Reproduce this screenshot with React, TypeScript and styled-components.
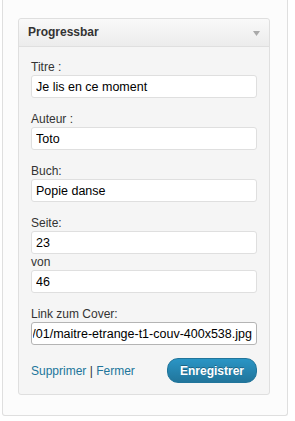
import styled, { createGlobalStyle } from "styled-components";
import { useEffect, useRef } from "react";

const GlobalStyle = createGlobalStyle`
    body {
        margin: 0;
        background: #fff;
        font-family: "Liberation Sans", Arial, sans-serif;
        color: #333;
    }
`;

const Sidebar = styled.div`
    width: 286px;
    box-sizing: border-box;
    margin-left: 2px;
    padding: 18px 0 20px 15px;
    background: #fcfcfc;
    border: 1px solid #dfdfdf;
    border-top: 0;
    border-radius: 0 0 3px 3px;
`;

const Widget = styled.div`
    width: 252px;
    box-sizing: border-box;
    background: #f5f5f5;
    border: 1px solid #dfdfdf;
    border-radius: 3px;
`;

const WidgetHeader = styled.div`
    display: flex;
    align-items: center;
    justify-content: space-between;
    height: 27px;
    padding: 0 9px;
    background: linear-gradient(to bottom, #f9f9f9, #ececec);
    border-bottom: 1px solid #dfdfdf;
    border-radius: 3px 3px 0 0;
`;

const WidgetTitle = styled.h3`
    margin: 0;
    font-size: 12px;
    font-weight: bold;
    color: #333;
    line-height: 27px;
`;

const Toggle = styled.svg`
    width: 7px;
    height: 5px;
    margin-top: 2px;
`;

const WidgetBody = styled.div`
    padding: 12px 12px 11px;
`;

const Field = styled.div`
    & + & {
        margin-top: 13px;
    }
`;

const Label = styled.label`
    display: block;
    font-size: 12px;
    line-height: 16px;
    color: #333;
`;

const Input = styled.input<{ $active?: boolean }>`
    display: block;
    width: 100%;
    height: 23px;
    box-sizing: border-box;
    margin: 0;
    padding: 0 4px 0 ${(p) => (p.$active ? "1px" : "4px")};
    font-family: "Liberation Sans", Arial, sans-serif;
    font-size: 12.5px;
    color: #000;
    background: #fff;
    border: 1px solid ${(p) => (p.$active ? "#b4b4b4" : "#dfdfdf")};
    border-radius: 3px;
    outline: none;
    caret-color: #000;
`;

const Actions = styled.div`
    display: flex;
    align-items: center;
    justify-content: space-between;
    margin-top: 13px;
`;

const Links = styled.div`
    font-size: 12px;
    color: #333;
`;

const ActionLink = styled.a`
    color: #21759b;
    text-decoration: none;
`;

const SaveButton = styled.button`
    height: 25px;
    padding: 0 12px;
    font-family: "Liberation Sans", Arial, sans-serif;
    font-size: 12px;
    font-weight: bold;
    color: #fff;
    background: linear-gradient(to bottom, #2a95c5, #21759b);
    border: 1px solid #21759b;
    border-radius: 11px;
    text-shadow: 0 -1px 0 rgba(0, 0, 0, 0.3);
    cursor: pointer;
`;

export default function App() {
    const coverRef = useRef<HTMLInputElement>(null);

    useEffect(() => {
        const el = coverRef.current;
        if (el) {
            el.focus();
            el.setSelectionRange(el.value.length, el.value.length);
            el.scrollLeft = el.scrollWidth;
        }
    }, []);

    return (
        <>
            <GlobalStyle />
            <Sidebar>
                <Widget>
                    <WidgetHeader>
                        <WidgetTitle>Progressbar</WidgetTitle>
                        <Toggle viewBox="0 0 7 5">
                            <polygon points="0,0 7,0 3.5,5" fill="#a9a9a9" />
                        </Toggle>
                    </WidgetHeader>
                    <WidgetBody>
                        <Field>
                            <Label>Titre :</Label>
                            <Input defaultValue="Je lis en ce moment" />
                        </Field>
                        <Field>
                            <Label>Auteur :</Label>
                            <Input defaultValue="Toto" />
                        </Field>
                        <Field>
                            <Label>Buch:</Label>
                            <Input defaultValue="Popie danse" />
                        </Field>
                        <Field>
                            <Label>Seite:</Label>
                            <Input defaultValue="23" />
                            <Label>von</Label>
                            <Input defaultValue="46" />
                        </Field>
                        <Field>
                            <Label>Link zum Cover:</Label>
                            <Input
                                ref={coverRef}
                                $active
                                defaultValue="http://www.monblog.fr/wp-content/uploads/2012/01/maitre-etrange-t1-couv-400x538.jpg"
                            />
                        </Field>
                        <Actions>
                            <Links>
                                <ActionLink href="#">Supprimer</ActionLink> | <ActionLink href="#">Fermer</ActionLink>
                            </Links>
                            <SaveButton>Enregistrer</SaveButton>
                        </Actions>
                    </WidgetBody>
                </Widget>
            </Sidebar>
        </>
    );
}
